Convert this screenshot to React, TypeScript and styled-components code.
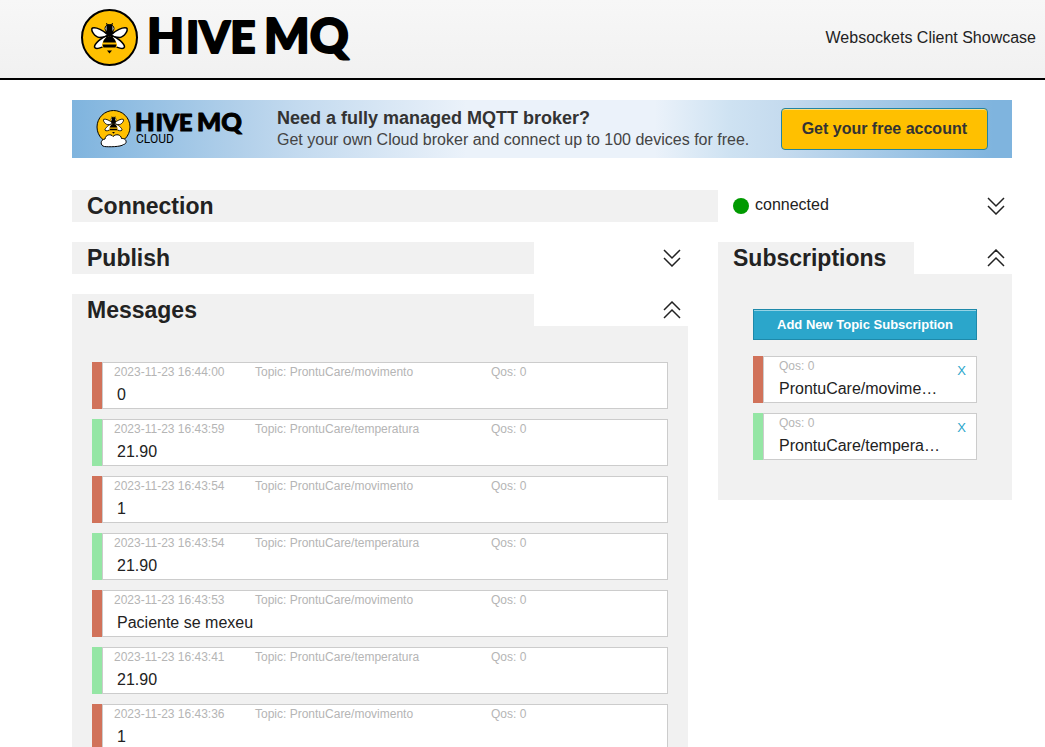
import React from "react";
import styled, { createGlobalStyle } from "styled-components";

const GlobalStyle = createGlobalStyle`
  *, *::before, *::after { box-sizing: border-box; }
  body {
    margin: 0;
    background: #fff;
    color: #222;
    font-family: "Liberation Sans", Arial, Helvetica, sans-serif;
    font-size: 16px;
    line-height: 20px;
  }
  h1, h2, h3, p, ul { margin: 0; padding: 0; }
  ul { list-style: none; }
`;

const Header = styled.header`
  display: flex;
  align-items: center;
  justify-content: space-between;
  height: 80px;
  padding: 0 9px 2px 80px;
  border-bottom: 2px solid #000;
  background: linear-gradient(#f7f7f7, #f1f1f1);
`;

const LogoLink = styled.a`
  display: block;
  line-height: 0;
`;

const Page = styled.main`
  padding: 20px 33px 0 72px;
`;

const Banner = styled.section`
  display: flex;
  align-items: center;
  height: 58px;
  margin-bottom: 32px;
  padding: 0 24px;
  background: linear-gradient(
    90deg,
    #7fb4de 0%,
    #b2d0ea 18%,
    #c3daef 24%,
    #ebf2fa 42%,
    #ebf2fa 62%,
    #cee2f2 70%,
    #c4daee 76%,
    #7fb4de 98%
  );
`;

const BannerCopy = styled.div`
  flex: 1;
  margin-left: 32px;
  padding-bottom: 2px;
  color: #444;
  line-height: 21px;
`;

const BannerTitle = styled.h2`
  color: #333;
  font-size: 18px;
  line-height: 22px;
`;

const CallToAction = styled.button`
  height: 42px;
  padding: 0 20px;
  border: 1px solid #2284a1;
  border-radius: 4px;
  background: #ffc000;
  box-shadow: inset 0 1px 0 rgba(255, 255, 255, 0.5);
  color: #333;
  font: bold 16px/20px "Liberation Sans", Arial, sans-serif;
  cursor: pointer;
`;

const Columns = styled.div<{ $gap?: number }>`
  display: grid;
  grid-template-columns: minmax(0, 1fr) 294px;
  column-gap: ${(p) => p.$gap ?? 30}px;
  align-items: start;
`;

const Stack = styled.div`
  display: grid;
  gap: 20px;
`;

const PanelHeader = styled.div<{ $title: number }>`
  display: grid;
  grid-template-columns: ${(p) => p.$title}fr 1fr;
  align-items: center;
`;

const Title = styled.h3`
  padding: 0 15px;
  background: #f1f1f1;
  font-size: 23px;
  line-height: 32px;
`;

const PanelBody = styled.div<{ $padding: string }>`
  padding: ${(p) => p.$padding};
  background: #f1f1f1;
`;

const Status = styled.div`
  display: flex;
  align-items: center;
  gap: 6px;
  padding-left: 15px;
  height: 32px;
`;

const Dot = styled.span`
  width: 16px;
  height: 16px;
  border-radius: 50%;
  background: #009a00;
`;

const StatusText = styled.span`
  flex: 1;
  padding-bottom: 2px;
`;

const Toggle = styled.button`
  display: block;
  justify-self: end;
  margin-right: 7px;
  padding: 0;
  border: 0;
  background: none;
  line-height: 0;
  cursor: pointer;
`;

const List = styled.ul`
  display: grid;
  gap: 10px;
`;

const Card = styled.li<{ $color: string; $inset: number }>`
  position: relative;
  height: 47px;
  padding-left: ${(p) => p.$inset}px;
  border: 1px solid #ccc;
  border-left: 0;
  background: linear-gradient(90deg, transparent 10px, #ccc 10px, #ccc 11px, #fff 11px);
  &::before {
    content: "";
    position: absolute;
    top: -1px;
    bottom: -1px;
    left: 0;
    width: 10px;
    background: ${(p) => p.$color};
  }
`;

const Meta = styled.div`
  display: grid;
  grid-template-columns: 141px 236px 1fr;
  color: #b5b5b5;
  font-size: 12px;
  line-height: 18px;
`;

const Payload = styled.p`
  padding-left: 3px;
  line-height: 27px;
`;

const Qos = styled.div`
  color: #b5b5b5;
  font-size: 12px;
  line-height: 18px;
`;

const Topic = styled.p`
  width: 161px;
  overflow: hidden;
  text-overflow: ellipsis;
  white-space: nowrap;
  line-height: 27px;
`;

const Remove = styled.a`
  position: absolute;
  top: 4px;
  right: 10px;
  color: #2ba6cb;
  font-size: 13px;
  text-decoration: none;
`;

const AddButton = styled.button`
  display: block;
  width: 100%;
  height: 31px;
  margin-bottom: 16px;
  border: 1px solid #1e89aa;
  background: #2ba6cb;
  box-shadow: inset 0 1px 0 rgba(255, 255, 255, 0.5);
  color: #fff;
  font: bold 13px/16px "Liberation Sans", Arial, sans-serif;
  cursor: pointer;
`;

const Bee = () => (
  <g>
    <path d="M-3 -12.5 L-2 -10 M3 -12.5 L2 -10" stroke="#000" strokeWidth="1" fill="none" />
    <g fill="#fff" stroke="#000" strokeWidth="1.5" strokeLinejoin="round">
      <path d="M-2 -1 C-6 -5 -13 -8.500 -17 -7.500 C-19.500 -6 -15 1.500 -10 2 C-6 2 -3 1 -1 0 Z" />
      <path d="M2 -1 C6 -5 13 -8.500 17 -7.500 C19.500 -6 15 1.500 10 2 C6 2 3 1 1 0 Z" />
      <path d="M-2 0 C-8 2 -15 8 -15 11.500 C-14 14.500 -7 12 -5 10 Z" />
      <path d="M2 0 C8 2 15 8 15 11.500 C14 14.500 7 12 5 10 Z" />
    </g>
    <path d="M0 1 C5 2 8 7 7.500 11.500 L3 14.500 H-3 L-7.500 11.500 C-8 7 -5 2 0 1 Z" fill="#ffc000" />
    <path d="M0 .5 C3 1 6 4 6.500 7 H-6.500 C-6 4 -3 1 0 .5 Z M-7 9 H7 L6 12 H-6 Z M-2.500 15 H2.500 L0 18 Z" fill="#000" />
    <ellipse cx="0" cy="-7" rx="4.500" ry="4" fill="#fff" stroke="#000" strokeWidth="1" />
    <path d="M-3 -11 H3 V-5 L5 -3 L0 1 L-5 -3 L-3 -5 Z" fill="#000" />
  </g>
);

const Wordmark = () => (
  <g
    fontFamily="Lato, sans-serif"
    fontWeight="900"
    fontSize="48"
    fill="#000"
    stroke="#000"
    strokeWidth="2"
    strokeLinejoin="round"
  >
    <text x="0">H</text>
    <text x="39" fontSize="44">
      IVE
    </text>
    <text x="117">MQ</text>
  </g>
);

const HiveLogo = () => (
  <svg width="280" height="66" viewBox="0 -3 280 66" role="img" aria-label="HiveMQ">
    <circle cx="29.500" cy="29.500" r="27.500" fill="#ffc000" stroke="#000" strokeWidth="2" />
    <g transform="translate(29.500 27.500)">
      <Bee />
    </g>
    <g transform="translate(67 45)">
      <Wordmark />
    </g>
  </svg>
);

const CloudLogo = () => (
  <svg width="149" height="50" viewBox="0 -5 149 50" role="img" aria-label="HiveMQ Cloud">
    <circle cx="17.500" cy="18" r="16.500" fill="#ffc000" stroke="#000" strokeWidth="1" />
    <g transform="translate(17.500 14.500) scale(.57)">
      <Bee />
    </g>
    <path
      d="M8.500 37.500 C4 37 4 30.500 9 30 C9.500 25.500 15 24.500 17 27.500 C20 24.500 25 25.500 25.500 29.500 C31 29 31.500 35 27.500 35.500 C25 38 12 38 8.500 37.500 Z"
      fill="#fff"
      stroke="#000"
      strokeWidth="1"
    />
    <g transform="translate(39 22) scale(.53)">
      <Wordmark />
    </g>
    <text x="40" y="34" fontFamily="Roboto, sans-serif" fontSize="12" fill="#000">
      CLOUD
    </text>
  </svg>
);

const Chevrons = ({ up = false }: { up?: boolean }) => (
  <svg width="18" height="18" viewBox="0 0 18 18" fill="none" stroke="#222" strokeWidth="1.500">
    {up ? (
      <path d="M1 9 L9 1 L17 9 M1 17 L9 9 L17 17" />
    ) : (
      <path d="M1 1 L9 9 L17 1 M1 9 L9 17 L17 9" />
    )}
  </svg>
);

const RED = "#d1725a";
const GREEN = "#95e6a5";

const messages = [
  { time: "16:44:00", topic: "movimento", payload: "0" },
  { time: "16:43:59", topic: "temperatura", payload: "21.90" },
  { time: "16:43:54", topic: "movimento", payload: "1" },
  { time: "16:43:54", topic: "temperatura", payload: "21.90" },
  { time: "16:43:53", topic: "movimento", payload: "Paciente se mexeu" },
  { time: "16:43:41", topic: "temperatura", payload: "21.90" },
  { time: "16:43:36", topic: "movimento", payload: "1" },
];

const colorOf = (topic: string) => (topic === "movimento" ? RED : GREEN);

export default function App() {
  return (
    <>
      <GlobalStyle />
      <Header>
        <LogoLink href="#">
          <HiveLogo />
        </LogoLink>
        <p>Websockets Client Showcase</p>
      </Header>
      <Page>
        <Banner>
          <CloudLogo />
          <BannerCopy>
            <BannerTitle>Need a fully managed MQTT broker?</BannerTitle>
            <p>Get your own Cloud broker and connect up to 100 devices for free.</p>
          </BannerCopy>
          <CallToAction>Get your free account</CallToAction>
        </Banner>
        <Stack>
          <Columns $gap={0}>
            <Title>Connection</Title>
            <Status>
              <Dot />
              <StatusText>connected</StatusText>
              <Toggle aria-label="Expand connection">
                <Chevrons />
              </Toggle>
            </Status>
          </Columns>
          <Columns>
            <Stack>
              <PanelHeader $title={3}>
                <Title>Publish</Title>
                <Toggle aria-label="Expand publish">
                  <Chevrons />
                </Toggle>
              </PanelHeader>
              <section>
                <PanelHeader $title={3}>
                  <Title>Messages</Title>
                  <Toggle aria-label="Collapse messages">
                    <Chevrons up />
                  </Toggle>
                </PanelHeader>
                <PanelBody $padding="36px 20px 20px">
                  <List>
                    {messages.map((m, i) => (
                      <Card key={i} $color={colorOf(m.topic)} $inset={22}>
                        <Meta>
                          <span>2023-11-23 {m.time}</span>
                          <span>Topic: ProntuCare/{m.topic}</span>
                          <span>Qos: 0</span>
                        </Meta>
                        <Payload>{m.payload}</Payload>
                      </Card>
                    ))}
                  </List>
                </PanelBody>
              </section>
            </Stack>
            <section>
              <PanelHeader $title={2}>
                <Title>Subscriptions</Title>
                <Toggle aria-label="Collapse subscriptions">
                  <Chevrons up />
                </Toggle>
              </PanelHeader>
              <PanelBody $padding="35px 35px 40px">
                <AddButton>Add New Topic Subscription</AddButton>
                <List>
                  {["movimento", "temperatura"].map((topic) => (
                    <Card key={topic} $color={colorOf(topic)} $inset={26}>
                      <Qos>Qos: 0</Qos>
                      <Topic>ProntuCare/{topic}</Topic>
                      <Remove href="#" aria-label={`Remove ${topic}`}>
                        X
                      </Remove>
                    </Card>
                  ))}
                </List>
              </PanelBody>
            </section>
          </Columns>
        </Stack>
      </Page>
    </>
  );
}
